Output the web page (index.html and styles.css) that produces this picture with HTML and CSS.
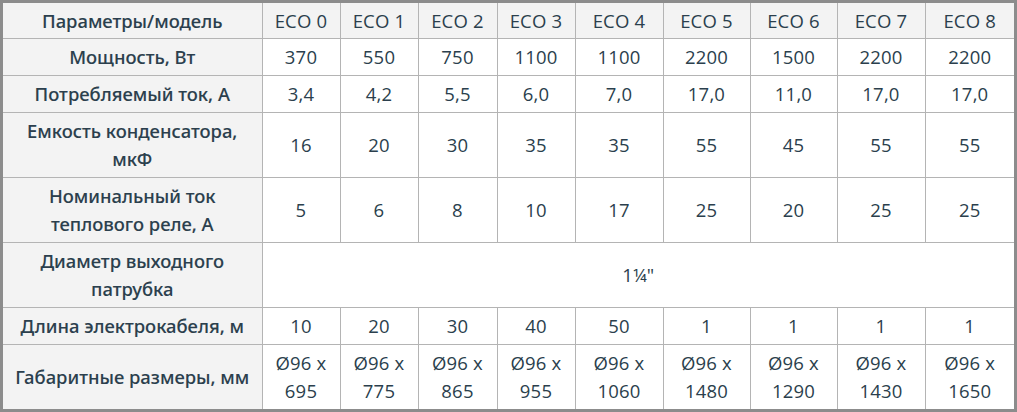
FILE: index.html
```html
<!DOCTYPE html>
<html lang="ru">
<head>
<meta charset="utf-8">
<title>Параметры</title>
<link rel="stylesheet" href="styles.css">
</head>
<body>
<div class="frame">
<table class="spec">
<colgroup>
<col class="c-label"><col class="c-s"><col class="c-s"><col class="c-s3"><col class="c-s"><col class="c-m"><col class="c-m2"><col class="c-m2"><col class="c-m"><col class="c-l">
</colgroup>
<tr class="head"><th class="label">Параметры/модель</th><th>ECO 0</th><th>ECO 1</th><th>ECO 2</th><th>ECO 3</th><th>ECO 4</th><th>ECO 5</th><th>ECO 6</th><th>ECO 7</th><th>ECO 8</th></tr>
<tr><th class="label">Мощность, Вт</th><td>370</td><td>550</td><td>750</td><td>1100</td><td>1100</td><td>2200</td><td>1500</td><td>2200</td><td>2200</td></tr>
<tr><th class="label">Потребляемый ток, А</th><td>3,4</td><td>4,2</td><td>5,5</td><td>6,0</td><td>7,0</td><td>17,0</td><td>11,0</td><td>17,0</td><td>17,0</td></tr>
<tr><th class="label">Емкость конденсатора,<br>мкФ</th><td>16</td><td>20</td><td>30</td><td>35</td><td>35</td><td>55</td><td>45</td><td>55</td><td>55</td></tr>
<tr><th class="label">Номинальный ток<br>теплового реле, А</th><td>5</td><td>6</td><td>8</td><td>10</td><td>17</td><td>25</td><td>20</td><td>25</td><td>25</td></tr>
<tr><th class="label">Диаметр выходного<br>патрубка</th><td colspan="9">1¼"</td></tr>
<tr><th class="label">Длина электрокабеля, м</th><td>10</td><td>20</td><td>30</td><td>40</td><td>50</td><td>1</td><td>1</td><td>1</td><td>1</td></tr>
<tr><th class="label">Габаритные размеры, мм</th><td>Ø96 x<br>695</td><td>Ø96 x<br>775</td><td>Ø96 x<br>865</td><td>Ø96 x<br>955</td><td>Ø96 x<br>1060</td><td>Ø96 x<br>1480</td><td>Ø96 x<br>1290</td><td>Ø96 x<br>1430</td><td>Ø96 x<br>1650</td></tr>
</table>
</div>
</body>
</html>
```
FILE: styles.css
```css
html, body {
  margin: 0;
  padding: 0;
  background: #ffffff;
}
.frame {
  width: 1017px;
  height: 412px;
  box-sizing: border-box;
  border: 3px solid #8c8c8c;
  overflow: hidden;
}
.spec {
  border-collapse: collapse;
  table-layout: fixed;
  width: 1011px;
  color: #2b3f4d;
}
.c-label { width: 259px; }
.c-s { width: 78px; }
.c-s3 { width: 79px; }
.c-m { width: 88px; }
.c-m2 { width: 87px; }
.c-l { width: 89px; }
.spec th, .spec td {
  border: 1px solid #b4b4b4;
  padding: 4px 0;
  line-height: 28px;
  text-align: center;
  vertical-align: middle;
  font-weight: normal;
  white-space: nowrap;
}
.spec tr:first-child th { border-top: none; }
.spec tr:last-child th, .spec tr:last-child td { border-bottom: none; }
.spec th:first-child { border-left: none; }
.spec tr > :last-child { border-right: none; }
.spec th.label {
  background: #f3f3f3;
  font-family: "Noto Sans", "DejaVu Sans", sans-serif;
  font-weight: 500;
  font-size: 18.4px;
  -webkit-text-stroke: 0.1px #2b3f4d;
}
.spec td, .head th {
  font-family: "Open Sans", "Noto Sans", sans-serif;
  font-size: 18.5px;
  letter-spacing: 0.2px;
}
.head th {
  background: #f3f3f3;
  line-height: 27px;
  padding-top: 4px;
  padding-bottom: 4px;
}
.head th.label {
  font-family: "Noto Sans", "DejaVu Sans", sans-serif;
  letter-spacing: 0;
}
```
